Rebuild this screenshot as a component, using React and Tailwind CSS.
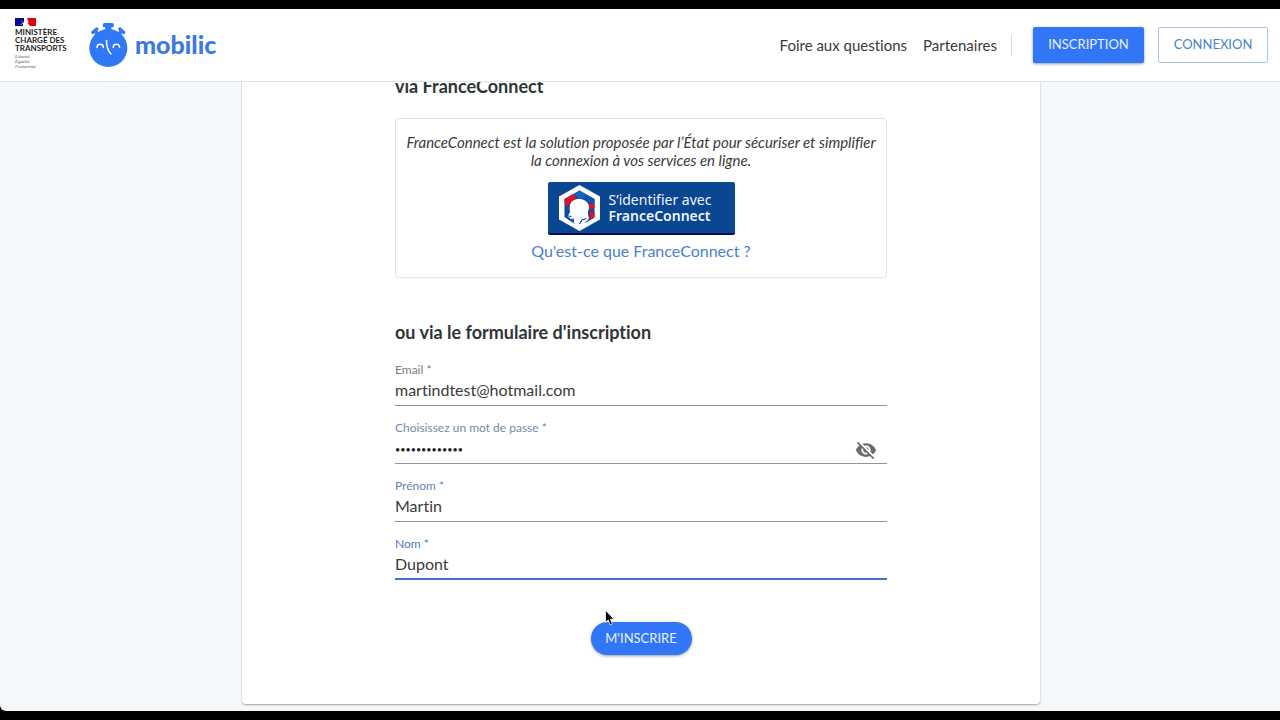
import { useState } from "react";
import { MdVisibility, MdVisibilityOff } from "react-icons/md";

function MinistryLogo() {
  return (
    <div className="flex w-[52px] flex-col pb-1 text-[#1e1e1e]">
      <svg className="h-2 w-[21px]" viewBox="0 0 21 8" aria-hidden="true">
        <path d="M0 0h9v8H0z" fill="#0a0a8c" />
        <path d="M9 0h4v8H8c0-1 .2-2-.6-2.600L9 4z" fill="#fff" />
        <path d="M12 0h9v8h-6c-.3-1.200-1.500-1.600-2.400-2l1-1.500z" fill="#e1000f" />
        <path d="M5.500 6.500l2-1M6.500 3l1.200.8" stroke="#fff" strokeWidth=".6" />
      </svg>
      <p className="mt-0.5 text-[8px] leading-2 font-bold whitespace-nowrap">
        MINISTÈRE
        <br />
        CHARGÉ DES
        <br />
        TRANSPORTS
      </p>
      <p className="mt-0.5 font-['Liberation_Serif',serif] text-[5px] leading-[5px] text-[#555] italic">
        Liberté
        <br />
        Égalité
        <br />
        Fraternité
      </p>
    </div>
  );
}

function MobilicLogo() {
  return (
    <a href="#accueil" className="flex items-center gap-1.5 text-[#3b78e0]">
      <svg className="h-[46px] w-10" viewBox="0 0 40 46" aria-hidden="true">
        <g fill="#3178f6">
          <circle cx="19.300" cy="26" r="19" />
          <rect x="13.800" y="1" width="11" height="4.200" rx="1.500" />
          <path d="M16.300 4h6v5h-6z" />
          <g transform="rotate(-42 6 9)">
            <rect x="1.800" y="7" width="8.400" height="3.400" rx="1.500" />
            <path d="M4.300 9h3.600v5H4.300z" />
          </g>
          <g transform="rotate(42 32.600 9)">
            <rect x="28.400" y="7" width="8.400" height="3.400" rx="1.500" />
            <path d="M30.800 9h3.600v5h-3.600z" />
          </g>
        </g>
        <g fill="none" stroke="#fff" strokeWidth="1.500" strokeLinecap="round">
          <path d="M8 25.500c0-4.400 6.400-4.400 6.400 0M24.200 25.500c0-4.400 6.400-4.400 6.400 0" />
          <path d="M17.500 18.500c0 5.500 1 10 4.500 13.500" />
        </g>
      </svg>
      <span className="pb-0.5 text-[25px] leading-8 font-black">mobilic</span>
    </a>
  );
}

function FranceConnectMark() {
  return (
    <svg className="h-[46px] w-[41px]" viewBox="0 0 41 46" aria-hidden="true">
      <path d="M20.500 0L41 11.500v23L20.500 46 0 34.500v-23z" fill="#fff" />
      <path d="M20.500 5.500L35.500 14v18.500L27 37.500l-12 1L5.500 32V14z" fill="#0b4a9c" />
      <path d="M5.500 14l9.500-5.400 2 5.400-6 4.500-3 3.500-2.500-4z" fill="#d8152a" />
      <path d="M20.500 5.500l6 3.500-1 5-6 .5-4-6z" fill="#1663c0" />
      <path d="M26.500 9l9 5v5l-6-1z" fill="#0d56b0" />
      <path d="M29 19l6.500 0v4l-4 2zM31 26l4.500 2v4.500l-5 2.500z" fill="#d8152a" />
      <path d="M11 20c1-4 5-6.500 10-6 5.500.5 9 4 9 8.500 0 2.500-1.500 4-1 6.500.5 2.500 1 3.500.500 5.500L20.500 42l-6-4.500 1-3-4 .5-.5-2-2.500-1.500 2.500-4.500c-.5-2-.5-5 0-7z" fill="#fff" />
      <path d="M6.500 30.500l6 1M11 34.500l4-.500M20.500 39l2.500-4 4.500-1.500" stroke="#0b4a9c" strokeWidth="1.200" fill="none" />
    </svg>
  );
}

function Field({ id, label, tone, active, children, ...props }) {
  return (
    <div>
      <label htmlFor={id} className={`block text-xs leading-4 ${tone}`}>
        {label} *
      </label>
      <div
        className={`flex h-7 items-center ${
          active ? "border-b-2 border-[#4472c8]" : "border-b border-[#949494]"
        }`}
      >
        <input
          id={id}
          required
          className={`h-6 w-full min-w-0 flex-1 bg-transparent leading-6 outline-none ${
            props.type === "password"
              ? "text-[9px] text-[#1e1e1e]"
              : "self-start text-base text-[#3a3a3a]"
          }`}
          {...props}
        />
        {children}
      </div>
    </div>
  );
}

export default function App() {
  const [visible, setVisible] = useState(false);
  const Eye = visible ? MdVisibility : MdVisibilityOff;
  return (
    <div className="flex min-h-screen flex-col bg-black py-[9px] font-['Lato',sans-serif] text-[#2f3437] [font-variant-ligatures:none]">
      <header className="flex h-[73px] shrink-0 items-center justify-between border-b border-[#dfe6ea] bg-white pr-3 pl-[15px]">
        <div className="flex items-center gap-[22px]">
          <MinistryLogo />
          <MobilicLogo />
        </div>
        <div className="flex items-center">
          <nav className="flex gap-4 text-[15px] leading-6 text-[#3a3a3a]">
            <a href="#faq">Foire aux questions</a>
            <a href="#partenaires">Partenaires</a>
          </nav>
          <div className="ml-3.5 h-[21px] w-px bg-[#d5dade]" />
          <button className="ml-[21px] h-9 w-[111px] rounded-xs bg-[#3276f8] text-[13px] text-[#e8f1ff] shadow-[0_1px_3px_rgba(0,0,0,0.4)]">
            INSCRIPTION
          </button>
          <button className="ml-3.5 h-9 w-[110px] rounded-xs border border-[#a9c4e4] bg-white text-[13px] text-[#4a80cc]">
            CONNEXION
          </button>
        </div>
      </header>

      <main className="flex-1 overflow-hidden rounded-bl-md bg-[#f4f8fa] pb-1.5 pl-0.5">
        <div className="mx-auto max-w-[798px] rounded-b-sm bg-white px-4 pb-[49px] shadow-[0_1px_2px_rgba(0,0,0,0.35)]">
          <div className="mx-auto max-w-[492px]">
            <h2 className="-mt-2 text-lg leading-6 font-bold">via FranceConnect</h2>
            <section className="mt-5 flex flex-col items-center rounded-sm border border-[#e2e2e2] px-2 py-3.5 text-center">
              <p className="text-[15px] leading-[18px] text-[#3a3a3a] italic">
                FranceConnect est la solution proposée par l’État pour sécuriser et simplifier
                <br />
                la connexion à vos services en ligne.
              </p>
              <button className="mt-[13px] flex h-[53px] w-[187px] items-center gap-[9px] rounded-xs border-b-2 border-[#000a5c] bg-[#0b4692] pl-[11px] text-left font-['Noto_Sans',sans-serif] text-sm leading-4 text-[#eef5ff]">
                <FranceConnectMark />
                <span>
                  S’identifier avec
                  <br />
                  <strong className="font-semibold">FranceConnect</strong>
                </span>
              </button>
              <a href="#franceconnect" className="mt-1 text-base leading-6 text-[#4a80cc]">
                Qu'est-ce que FranceConnect ?
              </a>
            </section>

            <h2 className="mt-[42px] text-lg leading-6 font-bold">
              ou via le formulaire d'inscription
            </h2>
            <form className="mt-[18px]" onSubmit={(e) => e.preventDefault()}>
              <div className="flex flex-col gap-3.5">
                <Field id="email" label="Email" tone="text-[#7b7b7b]" type="email" defaultValue="martindtest@hotmail.com" />
                <Field
                  id="password"
                  label="Choisissez un mot de passe"
                  tone="text-[#7488a8]"
                  type={visible ? "text" : "password"}
                  defaultValue="motdepasse123"
                >
                  <button
                    type="button"
                    aria-label="Afficher le mot de passe"
                    className="mr-2.5 text-[#6b6b6b]"
                    onClick={() => setVisible(!visible)}
                  >
                    <Eye className="size-[22px]" />
                  </button>
                </Field>
                <Field id="prenom" label="Prénom" tone="text-[#6582b4]" defaultValue="Martin" />
                <Field id="nom" label="Nom" tone="text-[#4f78c4]" defaultValue="Dupont" active />
              </div>
              <div className="relative mt-[42px] flex justify-center">
                <button className="h-[33px] w-[101px] rounded-full bg-[#3276f8] text-[13px] text-[#e8f1ff] shadow-[0_1px_3px_rgba(0,0,0,0.4)]">
                  M'INSCRIRE
                </button>
                <svg
                  className="pointer-events-none absolute -top-3 left-1/2 -ml-9 h-4 w-2.5"
                  viewBox="0 0 10 16"
                  aria-hidden="true"
                >
                  <path d="M.5.5v12l2.700-2.500 2 4.800 2.200-.9-2-4.700h3.800z" fill="#000" stroke="#fff" strokeWidth=".8" />
                </svg>
              </div>
            </form>
          </div>
        </div>
      </main>
    </div>
  );
}
